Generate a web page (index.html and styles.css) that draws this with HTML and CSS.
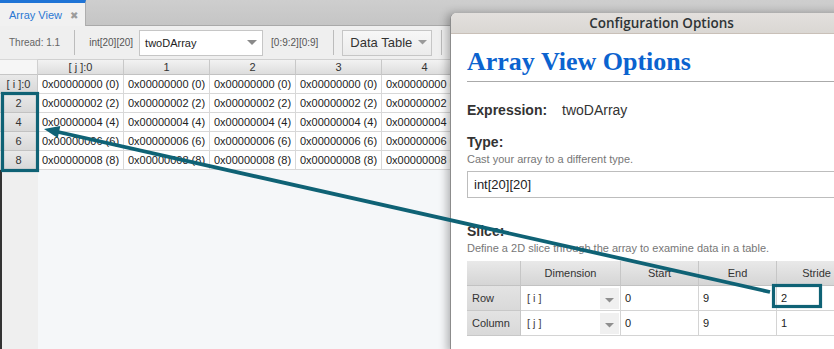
FILE: index.html
```html
<!DOCTYPE html>
<html lang="en">
<head>
    <meta charset="UTF-8">
    <title>Array View</title>
    <link rel="stylesheet" href="styles.css">
</head>
<body>

<div class="window">
    <div class="tabbar">
        <div class="tab">
            <span class="tab-title">Array View</span>
            <span class="tab-close">✖</span>
        </div>
    </div>

    <div class="toolbar">
        <span class="label thread">Thread: 1.1</span>
        <span class="sep"></span>
        <span class="label type">int[20][20]</span>
        <div class="combo">
            <span>twoDArray</span>
            <svg class="arrow" width="10" height="6" viewBox="0 0 10 6"><path d="M0 0 L10 0 L5 5 Z" fill="#8a8a8a"/></svg>
        </div>
        <span class="label slice">[0:9:2][0:9]</span>
        <span class="sep sep2"></span>
        <div class="btn">
            <span>Data Table</span>
            <svg class="arrow" width="9" height="5" viewBox="0 0 9 5"><path d="M0 0 L9 0 L4.5 4.5 Z" fill="#9a9a9a"/></svg>
        </div>
        <span class="sep sep3"></span>
    </div>

    <div class="grid">
        <div class="corner"></div>
        <div class="col-head">[ j ]:0</div>
        <div class="col-head">1</div>
        <div class="col-head">2</div>
        <div class="col-head">3</div>
        <div class="col-head">4</div>

        <div class="row-head">[ i ]:0</div>
        <div class="cell">0x00000000 (0)</div>
        <div class="cell">0x00000000 (0)</div>
        <div class="cell">0x00000000 (0)</div>
        <div class="cell">0x00000000 (0)</div>
        <div class="cell">0x00000000 (0)</div>

        <div class="row-head">2</div>
        <div class="cell">0x00000002 (2)</div>
        <div class="cell">0x00000002 (2)</div>
        <div class="cell">0x00000002 (2)</div>
        <div class="cell">0x00000002 (2)</div>
        <div class="cell">0x00000002 (2)</div>

        <div class="row-head">4</div>
        <div class="cell">0x00000004 (4)</div>
        <div class="cell">0x00000004 (4)</div>
        <div class="cell">0x00000004 (4)</div>
        <div class="cell">0x00000004 (4)</div>
        <div class="cell">0x00000004 (4)</div>

        <div class="row-head">6</div>
        <div class="cell">0x00000006 (6)</div>
        <div class="cell">0x00000006 (6)</div>
        <div class="cell">0x00000006 (6)</div>
        <div class="cell">0x00000006 (6)</div>
        <div class="cell">0x00000006 (6)</div>

        <div class="row-head">8</div>
        <div class="cell">0x00000008 (8)</div>
        <div class="cell">0x00000008 (8)</div>
        <div class="cell">0x00000008 (8)</div>
        <div class="cell">0x00000008 (8)</div>
        <div class="cell">0x00000008 (8)</div>
    </div>

    <div class="fill">
        <div class="fill-head"></div>
        <div class="fill-body"></div>
    </div>
</div>

<div class="dialog">
    <div class="dialog-title">Configuration Options</div>
    <div class="dialog-body">
        <h1>Array View Options</h1>

        <div class="expr">
            <span class="expr-label">Expression:</span>
            <span>twoDArray</span>
        </div>

        <h2>Type:</h2>
        <p class="hint">Cast your array to a different type.</p>
        <div class="input">int[20][20]</div>

        <h2 class="slice-title">Slice:</h2>
        <p class="hint">Define a 2D slice through the array to examine data in a table.</p>

        <div class="slice-table">
            <div class="st-head"></div>
            <div class="st-head">Dimension</div>
            <div class="st-head">Start</div>
            <div class="st-head">End</div>
            <div class="st-head">Stride</div>

            <div class="st-row">Row</div>
            <div class="st-cell dim">
                <span>[ i ]</span>
                <span class="drop"><svg width="9" height="5" viewBox="0 0 9 5"><path d="M0 0 L9 0 L4.5 4.5 Z" fill="#8f8f8f"/></svg></span>
            </div>
            <div class="st-cell">0</div>
            <div class="st-cell">9</div>
            <div class="st-cell">2</div>

            <div class="st-row">Column</div>
            <div class="st-cell dim">
                <span>[ j ]</span>
                <span class="drop"><svg width="9" height="5" viewBox="0 0 9 5"><path d="M0 0 L9 0 L4.5 4.5 Z" fill="#8f8f8f"/></svg></span>
            </div>
            <div class="st-cell">0</div>
            <div class="st-cell">9</div>
            <div class="st-cell">1</div>
        </div>
    </div>
</div>

<!-- annotation drawn over the screenshot -->
<svg class="annotation" width="834" height="349" viewBox="0 0 834 349">
    <rect x="2.5" y="93.5" width="35" height="77" fill="none" stroke="#0f6275" stroke-width="3.2"/>
    <rect x="773.5" y="285.5" width="47" height="21" fill="none" stroke="#0f6275" stroke-width="3.2"/>
    <line x1="770" y1="292" x2="56" y2="131.5" stroke="#0f6275" stroke-width="3.8"/>
    <polygon points="44,129 60.3,126 57.8,138" fill="#0f6275"/>
</svg>

</body>
</html>
```

FILE: styles.css
```css
* {
    box-sizing: border-box;
}
body {
    margin: 0;
    width: 834px;
    height: 349px;
    overflow: hidden;
    position: relative;
    font-family: "Liberation Sans", Arial, sans-serif;
    background-color: #f5f7f9;
}
.window {
    display: flex;
    flex-direction: column;
    height: 349px;
}

/* tab strip */
.tabbar {
    height: 26px;
    background: linear-gradient(#cecece, #c5c5c5);
    border-bottom: 1px solid #a9a9a9;
    display: flex;
}
.tab {
    width: 86px;
    height: 26px;
    background-color: #f1f1f1;
    border-top: 3px solid #1f74d6;
    border-right: 1px solid #aeaeae;
    display: flex;
    align-items: center;
    padding: 1px 0 0 9px;
}
.tab-title {
    font-size: 11px;
    color: #2a78d3;
}
.tab-close {
    font-family: "DejaVu Sans", sans-serif;
    font-size: 10px;
    color: #9c9c9c;
    margin-left: 8px;
}

/* toolbar */
.toolbar {
    height: 33px;
    background-color: #efefef;
    display: flex;
    align-items: center;
    padding-left: 9px;
    font-size: 10px;
    color: #666;
}
.sep {
    width: 1px;
    height: 25px;
    background-color: #bcbcbc;
    margin-left: 14px;
}
.type {
    margin-left: 14px;
    color: #555;
}
.combo {
    width: 124px;
    height: 26px;
    margin-left: 6px;
    background-color: #fff;
    border: 1px solid #c6c6c6;
    display: flex;
    align-items: center;
    justify-content: space-between;
    padding: 0 5px 0 5px;
    font-size: 11px;
    color: #222;
}
.slice {
    margin-left: 8px;
    color: #555;
}
.sep2 {
    margin-left: 15px;
}
.btn {
    width: 90px;
    height: 26px;
    margin-left: 8px;
    background: linear-gradient(#f7f7f7, #ebebeb);
    border: 1px solid #c6c6c6;
    display: flex;
    align-items: center;
    justify-content: space-between;
    padding: 0 4px 0 7px;
    font-size: 13px;
    color: #333;
}
.sep3 {
    margin-left: 9px;
}

/* data grid */
.grid {
    display: grid;
    grid-template-columns: 38px repeat(5, 86px);
    grid-auto-rows: 19px;
    grid-template-rows: 16px;
    font-size: 11px;
    color: #222;
}
.corner {
    background-color: #f6f6f6;
    border-right: 1px solid #d0d0d0;
    border-bottom: 1px solid #c6c6c6;
    border-top: 1px solid #d8d8d8;
}
.col-head {
    background: linear-gradient(#f2f2f2, #dddddd);
    border-right: 1px solid #c8c8c8;
    border-bottom: 1px solid #c2c2c2;
    border-top: 1px solid #d0d0d0;
    text-align: center;
    line-height: 14px;
    color: #333;
}
.row-head {
    background: linear-gradient(#e9e9e9, #d8d8d8);
    border-right: 1px solid #c8c8c8;
    border-bottom: 1px solid #c2c2c2;
    text-align: center;
    line-height: 18px;
    color: #333;
    white-space: nowrap;
}
.cell {
    background-color: #fff;
    border-right: 1px solid #d8d8d8;
    border-bottom: 1px solid #d8d8d8;
    padding-left: 4px;
    line-height: 18px;
    white-space: nowrap;
    overflow: hidden;
}
.fill {
    flex: 1;
    display: flex;
}
.fill-head {
    width: 38px;
    background-color: #efefef;
    border-left: 2px solid #333;
}
.fill-body {
    flex: 1;
    background-color: #f5f7f9;
}

/* configuration dialog */
.dialog {
    position: absolute;
    left: 450px;
    top: 13px;
    width: 422px;
    height: 340px;
    background-color: #fff;
    border-left: 1px solid #8c8c8c;
    border-radius: 6px 6px 0 0;
    box-shadow: -3px 0 9px rgba(0, 0, 0, 0.28);
    overflow: hidden;
}
.dialog-title {
    height: 21px;
    background: linear-gradient(#e3e0dd, #dad7d3);
    border-bottom: 1px solid #c9c0b8;
    text-align: center;
    font-family: "Open Sans", "Noto Sans", sans-serif;
    font-weight: 600;
    font-size: 13.5px;
    line-height: 20px;
    color: #2e3436;
}
.dialog-body {
    padding-left: 16px;
    color: #333;
}
h1 {
    margin: 13px 0 0 0;
    padding-bottom: 4px;
    border-bottom: 1px solid #aaa;
    font-family: "Liberation Serif", "Times New Roman", serif;
    font-weight: bold;
    font-size: 26px;
    line-height: 30px;
    color: #0b63cf;
}
.expr {
    margin-top: 20px;
    font-size: 14px;
    line-height: 16px;
    display: flex;
}
.expr-label {
    width: 95px;
    font-weight: bold;
}
h2 {
    margin: 16px 0 0 0;
    font-size: 14px;
    line-height: 16px;
    font-weight: bold;
    color: #333;
}
.slice-title {
    margin-top: 25px;
}
.hint {
    margin: 3px 0 0 0;
    font-size: 11px;
    line-height: 13px;
    color: #777;
}
.input {
    margin-top: 5px;
    height: 27px;
    border: 1px solid #bdbdbd;
    padding-left: 6px;
    font-size: 13px;
    line-height: 25px;
    color: #222;
}
.slice-table {
    margin-top: 6px;
    display: grid;
    grid-template-columns: 54px 100px 78px 78px 80px;
    grid-auto-rows: 25px;
    font-size: 11px;
    color: #333;
}
.st-head {
    background: linear-gradient(#e9e9e9, #d5d5d5);
    border-right: 1px solid #c6c6c6;
    border-bottom: 1px solid #c2c2c2;
    text-align: center;
    line-height: 24px;
}
.st-row {
    background: linear-gradient(#e3e3e3, #d9d9d9);
    border-right: 1px solid #c6c6c6;
    border-bottom: 1px solid #c8c8c8;
    padding-left: 5px;
    line-height: 24px;
}
.st-cell {
    background-color: #fff;
    border-right: 1px solid #d4d4d4;
    border-bottom: 1px solid #d4d4d4;
    padding-left: 4px;
    line-height: 24px;
    color: #222;
}
.dim {
    display: flex;
    align-items: center;
    justify-content: space-between;
    padding: 0 1px 0 6px;
    color: #444;
}
.drop {
    width: 19px;
    height: 21px;
    background-color: #f0f0f0;
    display: flex;
    align-items: center;
    justify-content: center;
    padding-top: 4px;
}

.annotation {
    position: absolute;
    left: 0;
    top: 0;
    pointer-events: none;
}
```
